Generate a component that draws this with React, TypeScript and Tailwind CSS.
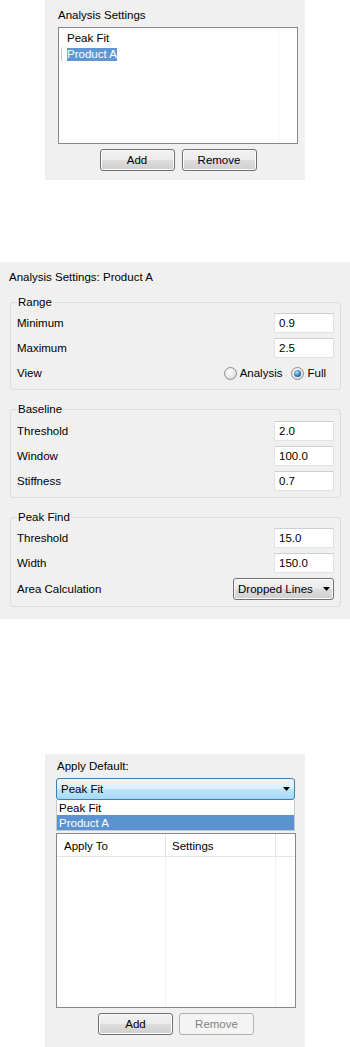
import React from "react";

function Button({ children, disabled }: { children: React.ReactNode; disabled?: boolean }) {
  if (disabled) {
    return (
      <div className="flex h-[22px] w-[75px] items-center justify-center rounded-[3px] border border-[#adb2b5] bg-[#f4f4f4] text-[#838383]">
        {children}
      </div>
    );
  }
  return (
    <div className="flex h-[22px] w-[75px] items-center justify-center rounded-[3px] border border-[#707070] bg-[linear-gradient(to_bottom,#f2f2f2_0%,#ebebeb_50%,#dddddd_50%,#cfcfcf_100%)] shadow-[inset_0_0_0_1px_#fcfcfc]">
      {children}
    </div>
  );
}

function Arrow() {
  return (
    <svg width="7" height="4" viewBox="0 0 7 4">
      <polygon points="0,0 7,0 3.5,4" fill="#000" />
    </svg>
  );
}

function Field({ value }: { value: string }) {
  return (
    <div className="flex h-[20px] w-[60px] items-center border border-[#dfe3e8] border-t-[#ccd0d6] bg-white pl-[4px]">
      {value}
    </div>
  );
}

function Radio({ label, checked }: { label: string; checked?: boolean }) {
  return (
    <div className="flex items-center gap-[3px]">
      <div className="flex h-[13px] w-[13px] items-center justify-center rounded-full border border-[#8f8f8f] bg-[radial-gradient(circle_at_40%_35%,#ffffff,#e4e4e4_60%,#cfcfcf)]">
        {checked && (
          <div className="h-[7px] w-[7px] rounded-full bg-[radial-gradient(circle_at_40%_35%,#b4e0fb,#2273b5_60%,#0c4878)]" />
        )}
      </div>
      <span>{label}</span>
    </div>
  );
}

function Row({ label, children, tall }: { label: string; children: React.ReactNode; tall?: boolean }) {
  return (
    <div className={`flex items-center justify-between ${tall ? "h-[22px]" : "h-[20px]"}`}>
      <span>{label}</span>
      {children}
    </div>
  );
}

function Group({ title, className, children }: { title: string; className: string; children: React.ReactNode }) {
  return (
    <fieldset className={`rounded-[3px] border border-[#d5dfe5] px-[6px] pb-[6px] ${className}`}>
      <legend className="px-[1px] leading-[14px]">{title}</legend>
      <div className="flex flex-col gap-[5px]">{children}</div>
    </fieldset>
  );
}

export default function App() {
  return (
    <div className="flex min-h-[1047px] flex-col bg-white font-['Liberation_Sans',Arial,sans-serif] text-[11.5px] leading-[14px] text-black">
      {/* Analysis settings list */}
      <div className="ml-[45px] flex h-[180px] w-[260px] flex-col bg-[#f0f0f0] pl-[13px] pt-[8px]">
        <div>Analysis Settings</div>
        <div className="mt-[5px] flex h-[117px] w-[240px] border border-[#828790] bg-white">
          <div className="flex flex-1 flex-col pt-[2px]">
            <div className="flex h-[16px] items-center pl-[8px]">Peak Fit</div>
            <div className="flex h-[16px] items-center pl-[2px]">
              <div className="flex h-[15px] items-center rounded-l-[3px] border-l border-[#c6c6c6] pl-[5px]">
                <span className="bg-[#5f97d5] leading-[13px] text-white">Product A</span>
              </div>
            </div>
          </div>
          <div className="w-[19px] border-l border-[#f5f5f5]" />
        </div>
        <div className="mt-[5px] flex w-[240px] justify-center gap-[7px]">
          <Button>Add</Button>
          <Button>Remove</Button>
        </div>
      </div>

      {/* Settings detail */}
      <div className="mt-[82px] flex h-[357px] flex-col bg-[#f0f0f0] pl-[10px] pr-[9px] pt-[8px]">
        <div className="-ml-[1px]">Analysis Settings: Product A</div>
        <Group title="Range" className="mt-[11px] pt-[4px]">
          <Row label="Minimum">
            <Field value="0.9" />
          </Row>
          <Row label="Maximum">
            <Field value="2.5" />
          </Row>
          <Row label="View">
            <div className="mr-[8px] flex items-center gap-[9px]">
              <Radio label="Analysis" />
              <Radio label="Full" checked />
            </div>
          </Row>
        </Group>
        <Group title="Baseline" className="mt-[12px] pt-[5px]">
          <Row label="Threshold">
            <Field value="2.0" />
          </Row>
          <Row label="Window">
            <Field value="100.0" />
          </Row>
          <Row label="Stiffness">
            <Field value="0.7" />
          </Row>
        </Group>
        <Group title="Peak Find" className="mt-[12px] pt-[4px]">
          <Row label="Threshold">
            <Field value="15.0" />
          </Row>
          <Row label="Width">
            <Field value="150.0" />
          </Row>
          <Row label="Area Calculation" tall>
            <div className="flex h-[22px] w-[101px] items-center justify-between rounded-[3px] border border-[#707070] bg-[linear-gradient(to_bottom,#f2f2f2_0%,#ebebeb_50%,#dddddd_50%,#cfcfcf_100%)] pl-[4px] pr-[3px] shadow-[inset_0_0_0_1px_#fcfcfc]">
              <span>Dropped Lines</span>
              <Arrow />
            </div>
          </Row>
        </Group>
      </div>

      {/* Apply default */}
      <div className="ml-[45px] mt-[135px] flex h-[293px] w-[260px] flex-col bg-[#f0f0f0] pl-[11px] pt-[5px]">
        <div className="pl-[1px]">Apply Default:</div>
        <div className="relative mt-[5px] w-[239px]">
          <div className="flex h-[22px] items-center justify-between rounded-[3px] border border-[#3c7fb1] bg-[linear-gradient(to_bottom,#eaf6fd_0%,#d9f0fc_50%,#bee6fd_50%,#a7d9f5_100%)] pl-[4px] pr-[4px]">
            <span>Peak Fit</span>
            <Arrow />
          </div>
          <div className="absolute left-0 top-[22px] z-10 flex w-[239px] flex-col border-x border-b border-[#c8c8c8] bg-white">
            <div className="flex h-[15px] items-center pl-[2px]">Peak Fit</div>
            <div className="flex h-[15px] items-center bg-[#5b93d0] pl-[2px] text-white">Product A</div>
          </div>
        </div>
        <div className="mt-[33px] grid h-[175px] w-[240px] grid-cols-[109px_110px_1fr] border border-[#828790] bg-white">
          <div className="flex flex-col">
            <div className="flex h-[23px] items-center border-b border-r border-[#e5e5e5] pl-[7px] pt-[2px]">Apply To</div>
            <div className="flex-1 border-r border-[#edf2f7]" />
          </div>
          <div className="flex flex-col">
            <div className="flex h-[23px] items-center border-b border-r border-[#e5e5e5] pl-[6px] pt-[2px]">Settings</div>
            <div className="flex-1 border-r border-[#edf2f7]" />
          </div>
          <div className="flex flex-col">
            <div className="h-[23px] border-b border-[#e5e5e5]" />
          </div>
        </div>
        <div className="mt-[5px] flex w-[240px] justify-center gap-[6px]">
          <Button>Add</Button>
          <Button disabled>Remove</Button>
        </div>
      </div>
    </div>
  );
}
